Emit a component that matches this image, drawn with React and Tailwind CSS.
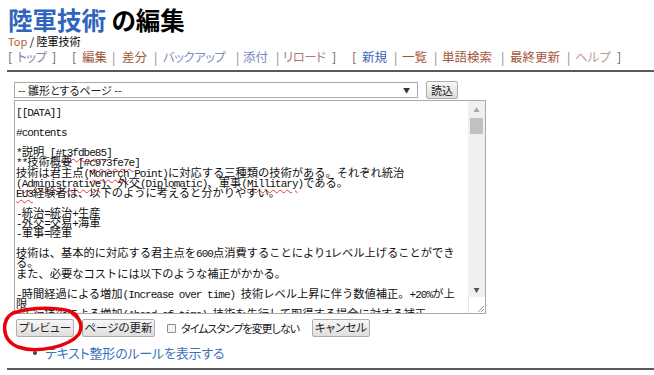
const ASCII_CLS = "font-['Liberation_Mono',monospace] text-[11px] tracking-[-0.97px]";
const UL_CLS = " underline decoration-wavy decoration-[#e03a3a] decoration-1 underline-offset-[2px]";

function runs(str) {
  const out = [];
  let cur = "";
  let curA = null;
  for (const ch of str) {
    const a = ch.charCodeAt(0) < 128;
    if (curA === null || a === curA) {
      cur += ch;
      curA = a;
    } else {
      out.push([cur, curA]);
      cur = ch;
      curA = a;
    }
  }
  if (cur) out.push([cur, curA]);
  return out;
}

function Seg({ text, u }) {
  return runs(text).map(([t, a], i) => (
    <span key={i} className={(a ? ASCII_CLS : "") + (u ? UL_CLS : "")}>
      {t}
    </span>
  ));
}

const LINES = [
  ["[[DATA]]"],
  [""],
  ["#contents"],
  [""],
  ["*説明 [#", { t: "t3fdbe85", u: 1 }, "]"],
  ["**技術概要 [#", { t: "c973fe7e", u: 1 }, "]"],
  ["技術は君主点(", { t: "Monerch", u: 1 }, " Point)に対応する三種類の技術がある。それぞれ統治"],
  ["(", { t: "Administrative", u: 1 }, ")、外交(Diplomatic)、軍事(", { t: "Millitary", u: 1 }, ")である。"],
  [{ t: "EU3", u: 1 }, "経験者は、以下のように考えると分かりやすい。"],
  [""],
  ["-統治=統治+生産"],
  ["-外交=交易+海軍"],
  ["-軍事=陸軍"],
  [""],
  ["技術は、基本的に対応する君主点を600点消費することにより1レベル上げることができ"],
  ["る。"],
  ["また、必要なコストには以下のような補正がかかる。"],
  [""],
  ["-時間経過による増加(Increase over time) 技術レベル上昇に伴う数値補正。+20%が上"],
  ["限"],
  ["-先行技術による増加(Ahead of time) 技術を先行して取得する場合に対する補正。"],
];

function TextLine({ parts }) {
  return (
    <div className="h-[10.1px] leading-[10.1px] whitespace-pre text-[11.25px] text-[#111]">
      {parts.map((p, i) =>
        typeof p === "string" ? (
          <Seg key={i} text={p} />
        ) : (
          <Seg key={i} text={p.t} u={p.u} />
        )
      )}
      {parts.length === 1 && parts[0] === "" ? "\u00a0" : null}
    </div>
  );
}

function Btn({ children, className }) {
  return (
    <div
      className={
        "h-[18px] flex items-center justify-center whitespace-nowrap border border-[#adadad] rounded-[2px] bg-gradient-to-b from-[#f7f7f7] to-[#dedede] text-[11.5px] text-[#222] " +
        className
      }
    >
      {children}
    </div>
  );
}

export default function App() {
  return (
    <div className="w-[654px] h-[375px] overflow-hidden bg-white relative font-['Noto_Sans_CJK_JP',sans-serif] text-black">
      <h1 className="pl-2 pt-[6px] text-[24.5px] leading-[28px] font-bold [font-feature-settings:'palt']">
        <span className="text-[#2f64c0]">陸軍技術</span> の編集
      </h1>
      <div className="pl-2 text-[11px] leading-[14px]">
        <span className="text-[#b0603a]">Top</span> / 陸軍技術
      </div>
      <nav className="ml-2 flex items-center h-[18px] text-[12.5px] text-[#666] whitespace-nowrap [font-feature-settings:'palt']">
        <span className="w-[4px]">[</span>
        <span className="ml-[5px] w-[30px] text-[#8284ac] tracking-[-0.5px]">トップ</span>
        <span className="ml-[5px] w-[4px]">]</span>
        <span className="ml-[16px] w-[4px]">[</span>
        <span className="ml-[6px] w-[25px] text-[#a3563c]">編集</span>
        <span className="ml-[5px] w-[3px] text-[#888]">|</span>
        <span className="ml-[7px] w-[25px] text-[#a3563c]">差分</span>
        <span className="ml-[7px] w-[3px] text-[#888]">|</span>
        <span className="ml-[6px] w-[65px] text-[#7d8fba] tracking-[-0.6px]">バックアップ</span>
        <span className="ml-[8px] w-[3px] text-[#888]">|</span>
        <span className="ml-[4px] w-[25px] text-[#6f89bd]">添付</span>
        <span className="ml-[8px] w-[3px] text-[#888]">|</span>
        <span className="ml-[4px] w-[42px] text-[#b07a78] tracking-[-0.6px]">リロード</span>
        <span className="ml-[7px] w-[4px]">]</span>
        <span className="ml-[16px] w-[4px]">[</span>
        <span className="ml-[6px] w-[25px] text-[#3a66b8]">新規</span>
        <span className="ml-[7px] w-[3px] text-[#888]">|</span>
        <span className="ml-[5px] w-[25px] text-[#a3563c]">一覧</span>
        <span className="ml-[7px] w-[3px] text-[#888]">|</span>
        <span className="ml-[5px] w-[51px] text-[#a3563c]">単語検索</span>
        <span className="ml-[8px] w-[3px] text-[#888]">|</span>
        <span className="ml-[6px] w-[50px] text-[#a3563c]">最終更新</span>
        <span className="ml-[7px] w-[3px] text-[#888]">|</span>
        <span className="ml-[5px] w-[37px] text-[#c09a9a]">ヘルプ</span>
        <span className="ml-[5px] w-[4px]">]</span>
      </nav>
      <div className="mt-[4px] ml-[7px] h-[2px] bg-[#5a5a5a]"></div>

      <div className="ml-[14px] mt-[9px] flex items-center h-[18px]">
        <div className="w-[404px] h-[16px] border border-[#a9a9a9] flex items-center justify-between pl-[3px] pr-[7px] text-[11px] text-[#222] [font-feature-settings:'palt']">
          <span>-- 雛形とするページ --</span>
          <span className="text-[7px] text-[#333]">▼</span>
        </div>
        <Btn className="ml-[8px] w-[32px] text-[11px]">読込</Btn>
      </div>

      <div className="ml-[14px] mt-[1px] w-[472px] h-[214px] border border-[#a9a9a9] flex">
        <div className="flex-1 overflow-hidden pl-[1px] pt-[5px]">
          {LINES.map((l, i) => (
            <TextLine key={i} parts={l} />
          ))}
        </div>
        <div className="w-[17px] flex flex-col">
          <div className="flex-1 bg-[#f0f0f0] flex flex-col items-center">
            <div className="h-[16px] flex items-center justify-center text-[6px] text-[#a3a3a3]">▲</div>
            <div className="mt-[1px] w-[13px] h-[16px] bg-[#c1c1c1]"></div>
            <div className="flex-1"></div>
            <div className="h-[16px] flex items-center justify-center text-[6px] text-[#505050]">▼</div>
          </div>
          <div className="h-[16px] bg-white border-l border-[#e6e6e6] relative">
            <svg width="16" height="16" viewBox="0 0 16 16" className="absolute right-0 bottom-0">
              <path d="M15 9 L9 15 M15 12 L12 15" stroke="#9a9a9a" strokeWidth="1" />
            </svg>
          </div>
        </div>
      </div>

      <div className="ml-[16px] mt-[5px] flex items-center h-[18px] whitespace-nowrap [font-feature-settings:'palt']">
        <Btn className="w-[58px]">プレビュー</Btn>
        <Btn className="ml-[8px] w-[73px]">ページの更新</Btn>
        <div className="ml-[12px] w-[9px] h-[9px] border border-[#8f8f8f] bg-[#f3f3f3] rounded-[1px]"></div>
        <span className="ml-[5px] w-[118px] text-[11px] tracking-[-1px] text-[#222]">タイムスタンプを変更しない</span>
        <Btn className="ml-[13px] w-[58px]">キャンセル</Btn>
      </div>

      <ul className="mt-[8px] ml-[33px] [font-feature-settings:'palt']">
        <li className="flex items-center h-[16px] text-[13px]">
          <span className="w-[4px] h-[4px] rounded-full bg-[#444]"></span>
          <span className="ml-[8px] text-[#3d72bb] tracking-[-0.2px]">テキスト整形のルールを表示する</span>
        </li>
      </ul>
      <div className="mt-[7px] ml-[7px] h-[2px] bg-[#5a5a5a]"></div>

      <svg className="absolute left-0 top-[300px]" width="100" height="60" viewBox="0 0 100 60">
        <path
          d="M78 18 C74 6, 34 6, 13 13 C1 19, 1 40, 18 47 C38 54, 70 46, 79 34 C83 26, 81 19, 72 13"
          fill="none"
          stroke="#e8000b"
          strokeWidth="3.5"
          strokeLinecap="round"
        />
      </svg>
    </div>
  );
}
